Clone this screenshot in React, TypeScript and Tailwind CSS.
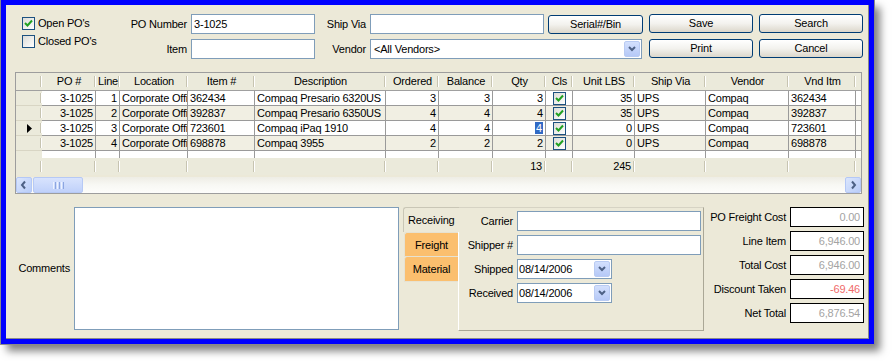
import React from "react";

const GRID =
  "grid grid-cols-[26px_54px_24px_68px_67px_131px_53px_54px_53px_27px_62px_71px_83px_67px_1fr]";

const headers = [
  "",
  "PO #",
  "Line",
  "Location",
  "Item #",
  "Description",
  "Ordered",
  "Balance",
  "Qty",
  "Cls",
  "Unit LBS",
  "Ship Via",
  "Vendor",
  "Vnd Itm",
  "",
];

// which columns are right aligned
const rightCols = [1, 2, 6, 7, 8, 10];

const rows = [
  ["3-1025", "1", "Corporate Office", "362434", "Compaq Presario 6320US", "3", "3", "3", "35", "UPS", "Compaq", "362434"],
  ["3-1025", "2", "Corporate Office", "392837", "Compaq Presario 6350US", "4", "4", "4", "35", "UPS", "Compaq", "392837"],
  ["3-1025", "3", "Corporate Office", "723601", "Compaq iPaq 1910", "4", "4", "4", "0", "UPS", "Compaq", "723601"],
  ["3-1025", "4", "Corporate Office", "698878", "Compaq 3955", "2", "2", "2", "0", "UPS", "Compaq", "698878"],
];

const CheckMark = () => (
  <svg width="9" height="9" viewBox="0 0 9 9">
    <path d="M1 4 L3.5 6.5 L8 1.5" fill="none" stroke="#21a121" strokeWidth="2" />
  </svg>
);

const XpCheck = ({ checked }: { checked?: boolean }) => (
  <div className="w-[13px] h-[13px] border border-[#1c5180] bg-gradient-to-br from-[#dcdcd7] to-white flex items-center justify-center shrink-0">
    {checked && <CheckMark />}
  </div>
);

const Chevron = ({ dir = "down" }: { dir?: "down" | "left" | "right" }) => {
  const d =
    dir === "down" ? "M2 3 L5 6 L8 3" : dir === "left" ? "M6 1.5 L3 5 L6 8.5" : "M4 1.5 L7 5 L4 8.5";
  return (
    <svg width="10" height="10" viewBox="0 0 10 10">
      <path d={d} fill="none" stroke="#4d6185" strokeWidth="2" />
    </svg>
  );
};

const DropBtn = () => (
  <div className="w-[16px] h-[16px] m-[1px] rounded-[2px] border border-[#b9cbf3] bg-gradient-to-b from-[#d3e0fd] to-[#b6c9f7] flex items-center justify-center shrink-0">
    <Chevron />
  </div>
);

const Btn = ({ children }: { children: React.ReactNode }) => (
  <div className="flex items-center">
    <div className="w-full h-[19px] rounded-[3px] border border-[#003c74] bg-gradient-to-b from-white via-[#f3f2ee] to-[#dcd7cb] text-center leading-[17px]">
      {children}
    </div>
  </div>
);

const Field = ({ className, value }: { className: string; value?: string }) => (
  <div className={`h-[20px] border border-[#7f9db9] bg-white px-[2px] leading-[18px] whitespace-nowrap ${className}`}>
    {value}
  </div>
);

const Label = ({ children }: { children: React.ReactNode }) => (
  <div className="flex items-center justify-end pr-[4px] whitespace-nowrap">{children}</div>
);

const HeadCell = ({ children, last }: { children?: React.ReactNode; last?: boolean }) => (
  <div className="relative h-[17px] text-center leading-[17px] whitespace-nowrap overflow-hidden">
    {children}
    {!last && (
      <span className="absolute right-0 top-[3px] bottom-[3px] w-[2px] border-l border-[#c7c4b1] border-r border-r-white" />
    )}
  </div>
);

const Total = ({ label, value, red }: { label: string; value: string; red?: boolean }) => (
  <div className="flex h-[20px]">
    <div className="w-[86px] flex items-center justify-end pr-[4px] whitespace-nowrap">{label}</div>
    <div
      className={`w-[74px] h-[20px] border border-black bg-white text-right pr-[3px] leading-[18px] ${
        red ? "text-[#f06a6a]" : "text-[#a3a3a3]"
      }`}
    >
      {value}
    </div>
  </div>
);

export default function App() {
  return (
    <div className="w-[894px] h-[361px] bg-white font-['Liberation_Sans',Arial,sans-serif] text-[11px] tracking-[-0.2px] text-black">
      <div className="ml-[1px] w-[873px] h-[344px] border-[5px] border-[#0000ff] ring-1 ring-[#8a8a8a] shadow-[6px_7px_8px_rgba(0,0,0,0.5)]">
        <div className="w-full h-full bg-[#ece9d8] border-b border-r border-[#8a8a8a] flex flex-col">
          {/* top filters */}
          <div className="flex pt-[9px]">
            <div className="w-[124px] pl-[16px] pt-[3px] flex flex-col gap-[5px]">
              <div className="flex items-center gap-[3px] h-[13px]">
                <XpCheck checked />
                <span>Open PO's</span>
              </div>
              <div className="flex items-center gap-[3px] h-[13px]">
                <XpCheck />
                <span>Closed PO's</span>
              </div>
            </div>
            <div className="grid grid-cols-[61px_124px_55px_178px_95px_110px_110px] grid-rows-[20px_20px] gap-y-[5px]">
              <Label>PO Number</Label>
              <Field className="w-[124px]" value="3-1025" />
              <Label>Ship Via</Label>
              <Field className="w-[174px]" />
              <Btn>Serial#/Bin</Btn>
              <div className="pl-[6px]">
                <Btn>Save</Btn>
              </div>
              <div className="pl-[6px]">
                <Btn>Search</Btn>
              </div>

              <Label>Item</Label>
              <Field className="w-[124px]" />
              <Label>Vendor</Label>
              <div className="col-span-2 w-[272px] h-[20px] border border-[#7f9db9] bg-white flex items-center">
                <span className="flex-1 px-[3px]">&lt;All Vendors&gt;</span>
                <DropBtn />
              </div>
              <div className="pl-[6px]">
                <Btn>Print</Btn>
              </div>
              <div className="pl-[6px]">
                <Btn>Cancel</Btn>
              </div>
            </div>
          </div>

          {/* data grid */}
          <div className="mt-[13px] ml-[9px] w-[847px] h-[122px] border border-[#9d9d9d] bg-[#ece9d8] flex flex-col">
            <div className={`${GRID} bg-[#ebeadb] border-b border-[#a0a0a0]`}>
              {headers.map((h, i) => (
                <HeadCell key={i} last={i === headers.length - 1}>
                  {h}
                </HeadCell>
              ))}
            </div>
            {rows.map((r, ri) => {
              const bg = ri % 2 === 1 ? "bg-[#f1efe3]" : "bg-white";
              const cells = [...r.slice(0, 8), "CLS", ...r.slice(8)];
              return (
                <div key={ri} className={`${GRID} h-[15px]`}>
                  <div className="bg-[#ebeadb] border-b border-[#d8d5c4] relative flex items-center pl-[11px]">
                    {ri === 2 && (
                      <svg width="5" height="9" viewBox="0 0 5 9">
                        <path d="M0 0 L5 4.5 L0 9 Z" fill="#000" />
                      </svg>
                    )}
                    <span className="absolute right-0 top-[2px] bottom-[2px] w-[2px] border-l border-[#c7c4b1] border-r border-r-white" />
                  </div>
                  {cells.map((c, ci) => {
                    const col = ci + 1;
                    const align = rightCols.includes(col) ? "text-right" : "text-left";
                    return (
                      <div
                        key={ci}
                        className={`${bg} ${align} border-r border-b border-[#9a9a9a] px-[2px] leading-[14px] whitespace-nowrap overflow-hidden`}
                      >
                        {c === "CLS" ? (
                          <div className="flex justify-center pt-[1px]">
                            <XpCheck checked />
                          </div>
                        ) : ri === 2 && col === 8 ? (
                          <span className="bg-[#316ac5] text-white px-[1px]">{c}</span>
                        ) : (
                          c
                        )}
                      </div>
                    );
                  })}
                  <div className={`${bg} border-b border-[#9a9a9a]`} />
                </div>
              );
            })}
            <div className={`${GRID} h-[8px]`}>
              <div className="bg-[#ebeadb]" />
              {headers.slice(1, -1).map((_, i) => (
                <div key={i} className="bg-white border-r border-[#9a9a9a]" />
              ))}
              <div className="bg-white" />
            </div>
            <div className={`${GRID} bg-[#ebeadb]`}>
              {headers.map((_, i) => (
                <div key={i} className="relative h-[17px] text-right pr-[4px] leading-[17px]">
                  {i === 8 ? "13" : i === 10 ? "245" : ""}
                  {i < headers.length - 1 && (
                    <span className="absolute right-0 top-[3px] bottom-[3px] w-[2px] border-l border-[#c7c4b1] border-r border-r-white" />
                  )}
                </div>
              ))}
            </div>
            {/* horizontal scrollbar */}
            <div className="mt-[2px] h-[16px] flex bg-gradient-to-b from-[#eeede5] via-[#f8f8f4] to-[#fdfdfb]">
              <div className="w-[16px] h-[16px] rounded-[2px] border border-[#b4c8f6] bg-gradient-to-br from-[#dbe6fd] to-[#b9cdf8] flex items-center justify-center">
                <Chevron dir="left" />
              </div>
              <div className="ml-[1px] w-[50px] h-[16px] rounded-[2px] border border-[#b6c9f5] bg-gradient-to-b from-[#d8e3fd] to-[#c0d1fa] flex items-center justify-center gap-[1px]">
                <span className="w-[1px] h-[7px] bg-[#eef3fe]" />
                <span className="w-[1px] h-[7px] bg-[#8ca6e0]" />
                <span className="w-[1px] h-[7px] bg-[#eef3fe]" />
                <span className="w-[1px] h-[7px] bg-[#8ca6e0]" />
                <span className="w-[1px] h-[7px] bg-[#eef3fe]" />
                <span className="w-[1px] h-[7px] bg-[#8ca6e0]" />
              </div>
              <div className="flex-1" />
              <div className="w-[16px] h-[16px] rounded-[2px] border border-[#b4c8f6] bg-gradient-to-br from-[#dbe6fd] to-[#b9cdf8] flex items-center justify-center">
                <Chevron dir="right" />
              </div>
            </div>
          </div>

          {/* bottom */}
          <div className="mt-[13px] flex items-start">
            <div className="w-[68px] h-[123px] flex items-center justify-end pr-[4px]">Comments</div>
            <div className="w-[325px] h-[123px] border border-[#7f9db9] bg-white" />
            <div className="ml-[4px] flex">
              <div className="w-[55px] flex flex-col">
                <div className="relative z-10 -mr-[1px] h-[25px] rounded-tl-[3px] border-t border-l border-[#c9c6b6] bg-[#ece9d8] pl-[4px] leading-[24px]">
                  Receiving
                </div>
                <div className="ml-[1px] h-[25px] rounded-tl-[3px] border-l border-t border-b border-[#e6e2d2] bg-[#fbbf6e] text-center leading-[24px]">
                  Freight
                </div>
                <div className="ml-[1px] h-[25px] rounded-tl-[3px] border-l border-b border-[#e6e2d2] bg-[#fbbf6e] text-center leading-[24px]">
                  Material
                </div>
              </div>
              <div className="w-[246px] h-[124px] border border-[#aaa796] border-t-[#d6d3c4] border-l-white pt-[3px] flex flex-col gap-[4px]">
                <div className="flex h-[20px]">
                  <div className="w-[58px] flex items-center justify-end pr-[4px]">Carrier</div>
                  <Field className="w-[184px]" />
                </div>
                <div className="flex h-[20px]">
                  <div className="w-[58px] flex items-center justify-end pr-[4px]">Shipper #</div>
                  <Field className="w-[184px]" />
                </div>
                <div className="flex h-[20px]">
                  <div className="w-[58px] flex items-center justify-end pr-[4px]">Shipped</div>
                  <div className="w-[95px] h-[20px] border border-[#7f9db9] bg-white flex items-center">
                    <span className="flex-1 px-[1px]">08/14/2006</span>
                    <DropBtn />
                  </div>
                </div>
                <div className="flex h-[20px]">
                  <div className="w-[58px] flex items-center justify-end pr-[4px]">Received</div>
                  <div className="w-[95px] h-[20px] border border-[#7f9db9] bg-white flex items-center">
                    <span className="flex-1 px-[1px]">08/14/2006</span>
                    <DropBtn />
                  </div>
                </div>
              </div>
            </div>
            <div className="flex flex-col gap-[4px]">
              <Total label="PO Freight Cost" value="0.00" />
              <Total label="Line Item" value="6,946.00" />
              <Total label="Total Cost" value="6,946.00" />
              <Total label="Discount Taken" value="-69.46" red />
              <Total label="Net Total" value="6,876.54" />
            </div>
          </div>
        </div>
      </div>
    </div>
  );
}
